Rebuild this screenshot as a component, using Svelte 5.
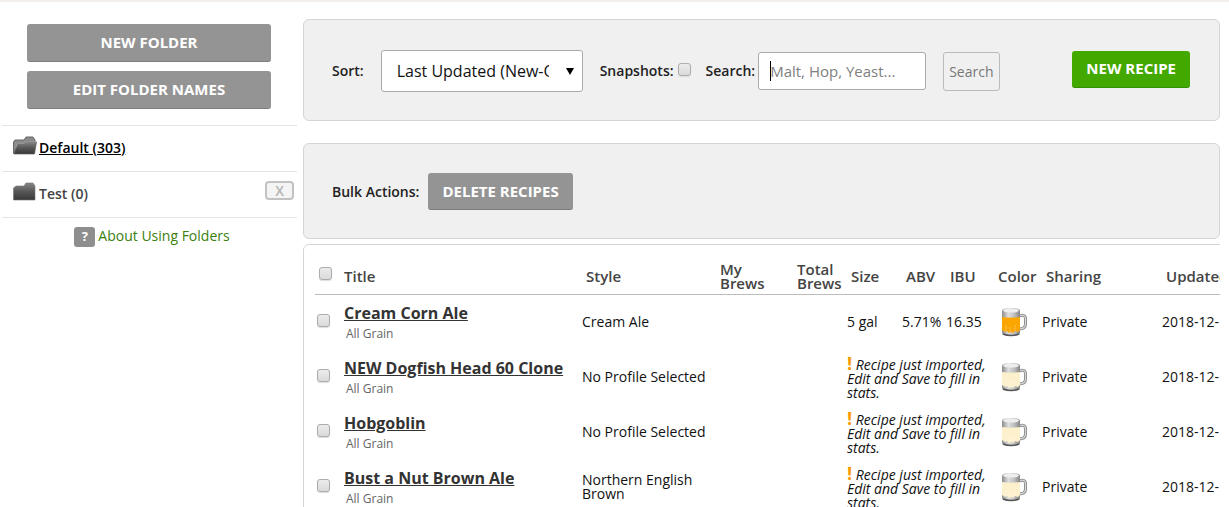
<script lang="ts">
  type Recipe = {
    title: string;
    method: string;
    style: string;
    size?: string;
    abv?: string;
    ibu?: string;
    color: string;
    sharing: string;
    updated: string;
    selected: boolean;
  };

  let sort = $state('updated');
  let snapshots = $state(false);
  let query = $state('');
  let currentFolder = $state('Default');

  const folders = [
    { name: 'Default', count: 303, removable: false },
    { name: 'Test', count: 0, removable: true }
  ];

  let recipes: Recipe[] = $state([
    {
      title: 'Cream Corn Ale', method: 'All Grain', style: 'Cream Ale',
      size: '5 gal', abv: '5.71%', ibu: '16.35',
      color: '#fba500', sharing: 'Private', updated: '2018-12-12', selected: false
    },
    {
      title: 'NEW Dogfish Head 60 Clone', method: 'All Grain', style: 'No Profile Selected',
      color: '#fdf0cd', sharing: 'Private', updated: '2018-12-12', selected: false
    },
    {
      title: 'Hobgoblin', method: 'All Grain', style: 'No Profile Selected',
      color: '#fdf0cd', sharing: 'Private', updated: '2018-12-12', selected: false
    },
    {
      title: 'Bust a Nut Brown Ale', method: 'All Grain', style: 'Northern English Brown',
      color: '#fdf0cd', sharing: 'Private', updated: '2018-12-12', selected: false
    }
  ]);

  let allSelected = $derived(recipes.every((r) => r.selected));

  function toggleAll() {
    const next = !allSelected;
    recipes.forEach((r) => (r.selected = next));
  }

  function deleteSelected() {
    recipes = recipes.filter((r) => !r.selected);
  }
</script>

<div class="page">
  <aside>
    <div class="folder-buttons">
      <button class="btn">New Folder</button>
      <button class="btn">Edit Folder Names</button>
    </div>

    <ul class="folders">
      {#each folders as folder, i}
        <li>
          <svg width="24" height="20" viewBox="0 0 24 20" aria-hidden="true">
            <defs>
              <linearGradient id="folder-{i}" x1="0" y1="0" x2="0" y2="1">
                <stop offset="0" stop-color="#858585" />
                <stop offset="0.5" stop-color="#575757" />
                <stop offset="1" stop-color="#383838" />
              </linearGradient>
            </defs>
            {#if folder.name === currentFolder}
              <path d="M0.5 17.5V6L2 4H11L13 1H20L22 4V6L20 17.5Z" fill="#8a8a8a" stroke="#696969" />
              <path d="M1 18L4.500 7.500H11L13 6H23.500L21.500 18Z" fill="url(#folder-{i})" stroke="#606060" stroke-width="0.7" />
              <path d="M2.500 12L4.500 7.300H11L13 5.800H23" fill="none" stroke="#b5b5b5" stroke-width="0.7" />
            {:else}
              <path d="M0.5 6L3 4H11L13 1H20L22 4V18H0.5Z" fill="url(#folder-{i})" stroke="#747474" stroke-width="0.6" />
            {/if}
          </svg>
          <a
            href="#{folder.name}"
            class:current={folder.name === currentFolder}
            onclick={() => (currentFolder = folder.name)}
          >{folder.name} ({folder.count})</a>
          {#if folder.removable}
            <button class="remove" aria-label="Delete folder {folder.name}">X</button>
          {/if}
        </li>
      {/each}
    </ul>

    <p class="help">
      <span class="help-icon" aria-hidden="true">?</span>
      <a href="#folders-help">About Using Folders</a>
    </p>
  </aside>

  <main>
    <form class="panel toolbar" onsubmit={(e) => e.preventDefault()}>
      <label for="sort">Sort:</label>
      <div class="select-wrap">
        <select id="sort" bind:value={sort}>
          <option value="updated">Last Updated (New-Old)</option>
          <option value="title">Title (A-Z)</option>
        </select>
        <svg class="arrow" width="8" height="7" viewBox="0 0 8 7" aria-hidden="true">
          <path d="M0 0H8L4 7Z" fill="#000" />
        </svg>
      </div>
      <label for="snapshots">Snapshots:</label>
      <input id="snapshots" type="checkbox" bind:checked={snapshots} />
      <label for="search">Search:</label>
      <div class="search-wrap" class:empty={!query}>
        <input id="search" class="search" type="text" placeholder="Malt, Hop, Yeast..." bind:value={query} />
      </div>
      <button class="search-btn">Search</button>
      <button type="button" class="btn green">New Recipe</button>
    </form>

    <div class="panel bulk">
      <span class="bulk-label">Bulk Actions:</span>
      <button class="btn" onclick={deleteSelected}>Delete Recipes</button>
    </div>

    <div class="table-clip">
      <div class="table-panel">
        <table>
          <colgroup>
            <col class="c-check" />
            <col class="c-title" />
            <col class="c-style" />
            <col class="c-my" />
            <col class="c-total" />
            <col class="c-size" />
            <col class="c-abv" />
            <col class="c-ibu" />
            <col class="c-color" />
            <col class="c-sharing" />
            <col class="c-updated" />
          </colgroup>
          <thead>
            <tr>
              <th><input type="checkbox" aria-label="Select all" checked={allSelected} onchange={toggleAll} /></th>
              <th class="flush">Title</th>
              <th>Style</th>
              <th>My<br />Brews</th>
              <th>Total<br />Brews</th>
              <th>Size</th>
              <th>ABV</th>
              <th>IBU</th>
              <th>Color</th>
              <th>Sharing</th>
              <th>Updated</th>
            </tr>
          </thead>
          <tbody>
            {#each recipes as recipe}
              <tr>
                <td class="check"><input type="checkbox" aria-label="Select {recipe.title}" bind:checked={recipe.selected} /></td>
                <td>
                  <a class="title" href="#recipe">{recipe.title}</a>
                  <span class="method">{recipe.method}</span>
                </td>
                <td>{recipe.style}</td>
                <td></td>
                <td></td>
                {#if recipe.abv}
                  <td>{recipe.size}</td>
                  <td>{recipe.abv}</td>
                  <td>{recipe.ibu}</td>
                {:else}
                  <td colspan="3" class="notice"><b>!</b> Recipe just imported, Edit and Save to fill in stats.</td>
                {/if}
                <td class="mug">
                  <svg width="27" height="30" viewBox="0 0 27 30" aria-hidden="true">
                    <defs>
                      <linearGradient id="glass" x1="0" y1="0" x2="1" y2="0">
                        <stop offset="0" stop-color="#8c8c8c" />
                        <stop offset="0.35" stop-color="#dedede" />
                        <stop offset="0.7" stop-color="#bcbcbc" />
                        <stop offset="1" stop-color="#858585" />
                      </linearGradient>
                    </defs>
                    <path d="M18 9Q24.500 6.500 24.500 12V17Q24.500 22 18 22" fill="none" stroke="#8a8a8a" stroke-width="3" />
                    <path d="M18 9Q24.500 6.500 24.500 12V17Q24.500 22 18 22" fill="none" stroke="#d8d8d8" stroke-width="1.200" />
                    <path d="M1 4Q1 1 10 1T19 4V26Q19 29 10 29T1 26Z" fill="url(#glass)" />
                    <ellipse cx="10" cy="3.500" rx="8" ry="2" fill="#ededed" />
                    <path d="M1 10Q10 11.500 19 10V23L17 25L14 24L12 26L10 25L8 26L6 24L4 25L1 23Z" fill={recipe.color} />
                    <path d="M5 18V24M9 20V25M14 18V24" stroke="#fff" stroke-opacity="0.3" />
                    <path d="M2 27Q10 30 18 27" fill="none" stroke="#555" stroke-width="1.500" />
                  </svg>
                </td>
                <td>{recipe.sharing}</td>
                <td>{recipe.updated}</td>
              </tr>
            {/each}
          </tbody>
        </table>
      </div>
    </div>
  </main>
</div>

<style>
  :global(body) {
    background: #fff;
  }

  .page {
    display: grid;
    grid-template-columns: 295px minmax(0, 1fr);
    gap: 6px;
    box-sizing: border-box;
    height: 100vh;
    overflow: hidden;
    padding: 0 9px 0 2px;
    border-top: 2px solid #f3efec;
    font-family: 'Open Sans', 'Noto Sans', sans-serif;
    font-size: 14px;
    line-height: 14px;
    color: #111;
  }

  input, select, button {
    box-sizing: border-box;
    margin: 0;
    font-family: inherit;
  }

  /* sidebar */
  aside {
    padding-top: 22px;
  }

  .folder-buttons {
    display: grid;
    gap: 9px;
    padding: 0 26px 16px 25px;
  }

  .btn {
    height: 37px;
    padding: 0 14px 1px;
    border: 0;
    border-bottom: 1px solid #7d7d7d;
    border-radius: 3px;
    background: #949494;
    color: #fff;
    font-size: 15px;
    font-weight: 700;
    text-transform: uppercase;
    cursor: pointer;
  }

  .folder-buttons .btn {
    height: 38px;
  }

  .folders {
    list-style: none;
    margin: 0;
    padding: 0;
    border-bottom: 1px solid #e4e4e4;
  }

  .folders li {
    display: flex;
    align-items: center;
    gap: 2px;
    height: 43px;
    padding: 0 3px 2px 11px;
    border-top: 1px solid #e4e4e4;
  }

  .folders svg {
    margin-bottom: 4px;
  }

  .folders a {
    color: #444;
    font-weight: 600;
    text-decoration: none;
  }

  .folders a.current {
    color: #000;
    text-decoration: underline;
  }

  .remove {
    width: 29px;
    height: 19px;
    margin-left: auto;
    margin-bottom: 6px;
    padding: 0;
    border: 2px solid #c2c2c2;
    border-radius: 4px;
    background: #f4f4f4;
    color: #b5b5b5;
    font-size: 14px;
    font-weight: 600;
    line-height: 14px;
  }

  .help {
    display: flex;
    justify-content: center;
    gap: 3px;
    margin: 0;
    padding: 9px 0 0 5px;
    line-height: 18px;
  }

  .help a {
    color: #3b8110;
    text-decoration: none;
  }

  .help-icon {
    width: 21px;
    height: 20px;
    border-radius: 3px;
    background: #8e8e8e;
    color: #fff;
    font-size: 13px;
    font-weight: 700;
    text-align: center;
  }

  /* panels */
  main {
    padding-top: 17px;
  }

  .panel {
    display: flex;
    align-items: center;
    box-sizing: border-box;
    border: 1px solid #d5d5d5;
    border-radius: 6px;
    background: #f0f0f0;
  }

  .panel label,
  .bulk-label {
    color: #222;
    font-size: 14px;
    font-weight: 600;
  }

  .toolbar {
    padding: 30px 29px 28px 28px;
    margin-bottom: 22px;
  }

  .select-wrap {
    position: relative;
    margin: 0 17px;
  }

  select {
    appearance: none;
    display: block;
    width: 202px;
    height: 42px;
    padding: 0 33px 0 15px;
    border: 1px solid #aaa;
    border-radius: 3px;
    background: #fff;
    color: #111;
    font-size: 16px;
  }

  .arrow {
    position: absolute;
    top: 18px;
    right: 9px;
    pointer-events: none;
  }

  input[type='checkbox'] {
    appearance: none;
    display: block;
    width: 13px;
    height: 13px;
    border: 1px solid #acacac;
    border-radius: 3px;
    background: linear-gradient(#ececec, #dadada);
    box-shadow: 0 1px 1px #ddd;
  }

  input[type='checkbox']:checked {
    background: #777;
  }

  .toolbar input[type='checkbox'] {
    margin: 0 15px 4px 4px;
  }

  .search-wrap {
    position: relative;
    margin: 0 17px 0 3px;
  }

  /* text cursor */
  .search-wrap.empty::after {
    content: '';
    position: absolute;
    top: 9px;
    left: 12px;
    width: 1px;
    height: 20px;
    background: #000;
  }

  .search {
    display: block;
    width: 168px;
    height: 38px;
    padding: 0 11px;
    border: 1px solid #aaa;
    border-radius: 3px;
    background: #fff;
    color: #111;
    font-size: 15px;
    outline: none;
  }

  .search::placeholder {
    color: #808080;
  }

  .search-btn {
    height: 39px;
    padding: 0 5px;
    border: 1px solid #bbb;
    border-radius: 3px;
    background: #f0f0f0;
    color: #777;
    font-size: 14px;
  }

  .green {
    margin-left: auto;
    margin-bottom: 4px;
    background: #43a800;
    border-bottom-color: #359000;
  }

  .bulk {
    gap: 9px;
    padding: 29px 28px 28px;
    margin-bottom: 5px;
  }

  /* recipe table */
  .table-clip {
    overflow: hidden;
  }

  .table-panel {
    width: max-content;
    min-width: 100%;
    padding: 0 11px;
    border: 1px solid #d5d5d5;
    border-radius: 6px;
  }

  table {
    width: 987px;
    table-layout: fixed;
    border-collapse: collapse;
  }

  .c-check { width: 29px; }
  .c-title { width: 238px; }
  .c-style { width: 134px; }
  .c-my { width: 77px; }
  .c-total { width: 54px; }
  .c-size { width: 55px; }
  .c-abv { width: 44px; }
  .c-ibu { width: 48px; }
  .c-color { width: 48px; }
  .c-sharing { width: 120px; }
  .c-updated { width: 140px; }

  th {
    height: 36px;
    padding: 13px 0 0 4px;
    border-bottom: 1px solid #bbb;
    color: #444;
    font-size: 15px;
    font-weight: 600;
    text-align: left;
  }

  th.flush {
    padding-left: 0;
  }

  th input[type='checkbox'] {
    margin-bottom: 6px;
  }

  td {
    height: 53px;
    padding: 0 0 2px;
  }

  .check {
    height: 51px;
    padding: 0 0 4px 2px;
  }

  .title {
    display: block;
    color: #333;
    font-size: 16px;
    font-weight: 700;
    line-height: 24px;
  }

  .method {
    display: block;
    padding-left: 2px;
    color: #666;
    font-size: 12px;
    line-height: 18px;
  }

  .notice {
    height: 55px;
    padding: 0;
    font-style: italic;
  }

  .notice b {
    color: #fa9b00;
    font-size: 18px;
    font-style: normal;
    line-height: 14px;
  }

  .mug {
    padding-left: 7px;
  }

  .mug svg {
    display: block;
  }
</style>
